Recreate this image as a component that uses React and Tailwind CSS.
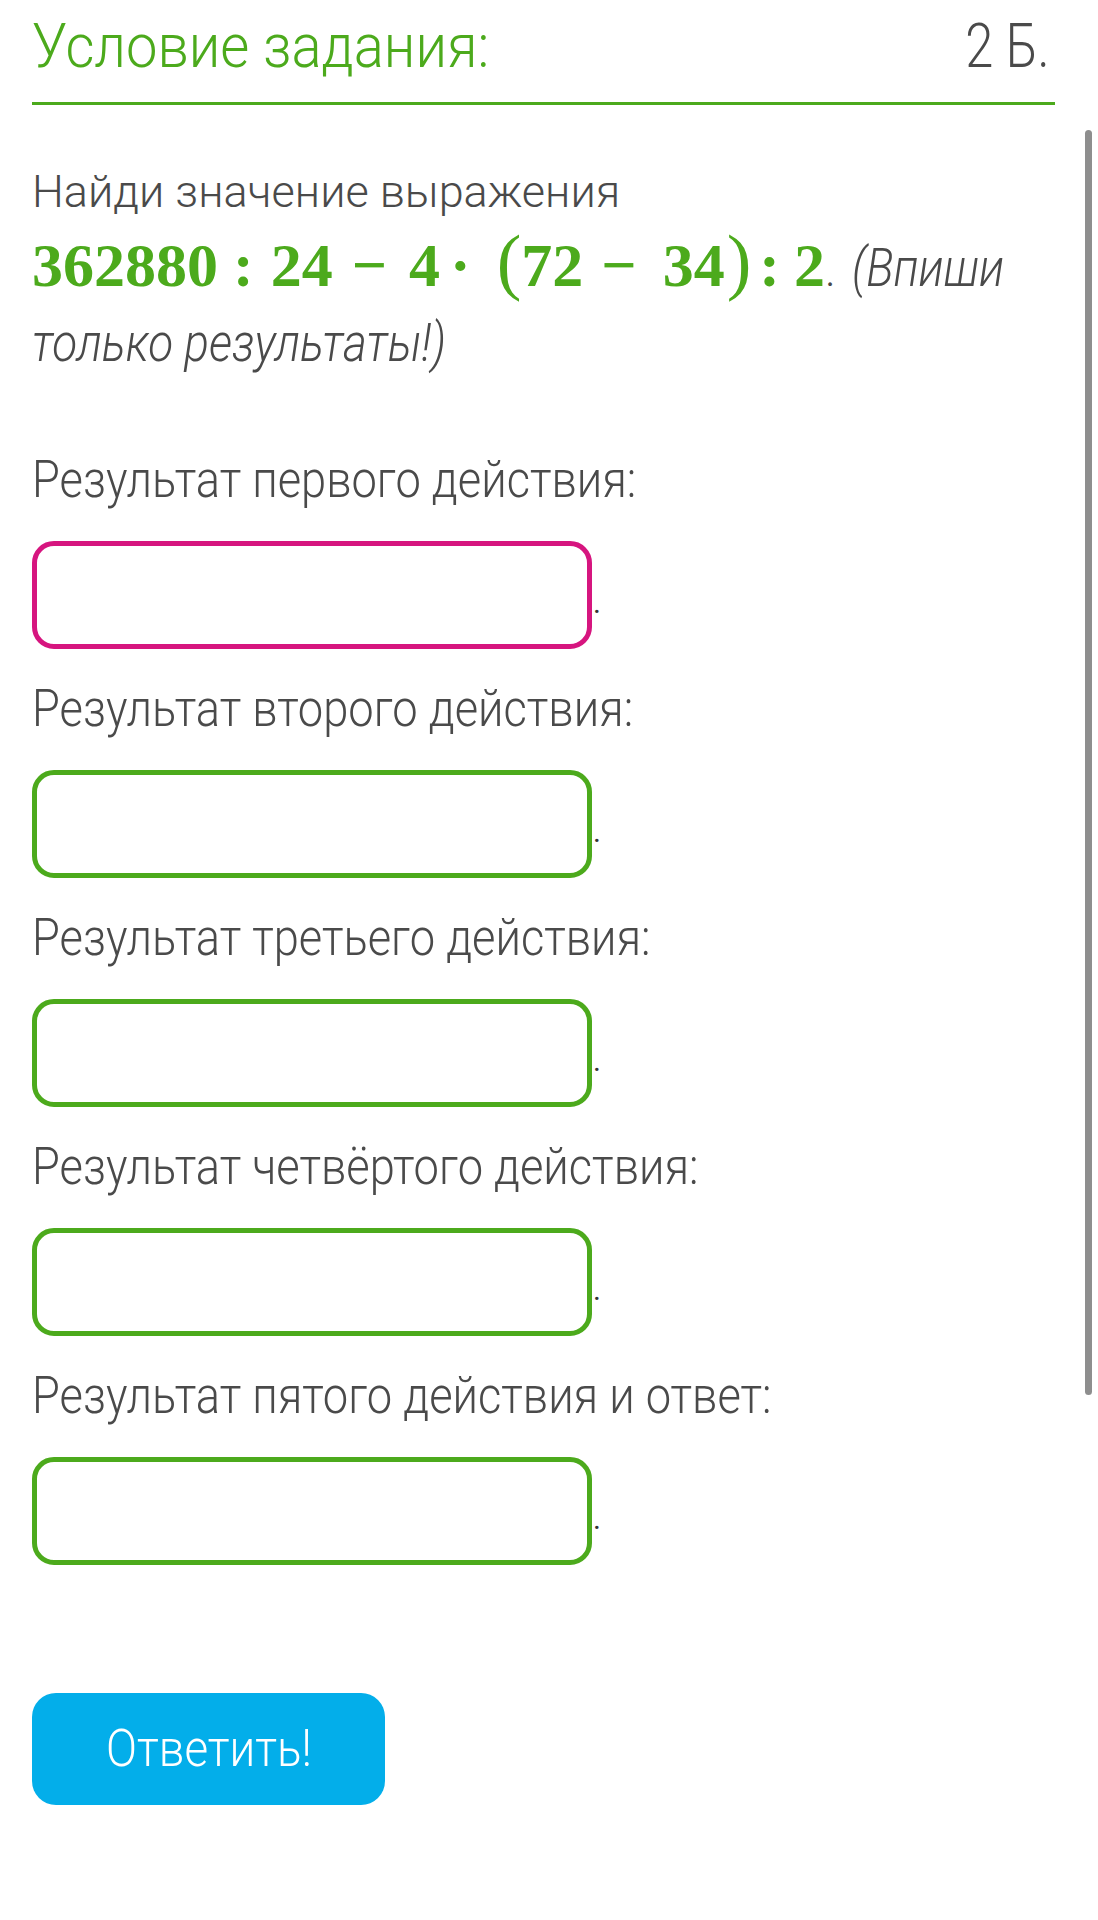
export default function App() {
  const labels = [
    "Результат первого действия:",
    "Результат второго действия:",
    "Результат третьего действия:",
    "Результат четвёртого действия:",
    "Результат пятого действия и ответ:",
  ];
  return (
    <div className="relative w-[1098px] h-[1920px] bg-white font-['Roboto',sans-serif] font-light text-[#4a4a4a]">
      <div className="pl-[32px] w-[1055px]">
        <div className="flex items-start justify-between pt-[6px] pb-[16px] pr-[5px] border-b-[3px] border-[#4caa1c] text-[61px] leading-[80px]">
          <span className="inline-block text-[#4caa1c] origin-left scale-x-[0.92]">Условие задания:</span>
          <span className="inline-block origin-right scale-x-[0.83]">2 Б.</span>
        </div>

        <div className="mt-[55px] text-[45px] leading-[64px]">Найди значение выражения</div>
        <div className="flex items-baseline h-[78px] leading-[78px] text-[62px] font-bold font-['Liberation_Serif',serif] text-[#4caa1c]">
          <span>362880</span>
          <span className="ml-[15px]">:</span>
          <span className="ml-[17px]">24</span>
          <span className="ml-[19px]">−</span>
          <span className="ml-[22px]">4</span>
          <span className="ml-[10px]">·</span>
          <span className="ml-[26px] text-[74px] font-normal leading-none">(</span>
          <span>72</span>
          <span className="ml-[18px]">−</span>
          <span className="ml-[26px]">34</span>
          <span className="ml-[2px] text-[74px] font-normal leading-none">)</span>
          <span className="ml-[8px]">:</span>
          <span className="ml-[14px]">2</span>
          <span className="font-['Roboto',sans-serif] font-light text-[#4a4a4a] text-[45px]">.</span>
          <span className="inline-block ml-[16px] origin-left scale-x-[0.85] font-['Roboto',sans-serif] font-light italic text-[#4a4a4a] text-[54px]">(Впиши</span>
        </div>
        <div className="mt-[9px] text-[54px] leading-[64px] italic">
          <span className="inline-block origin-left scale-x-[0.85]">только результаты!)</span>
        </div>

        <div className="mt-[73px] flex flex-col gap-[28px]">
          {labels.map((l, i) => (
            <div key={i} className="flex flex-col gap-[29px]">
              <div className="text-[52px] leading-[64px]">
                <span className="inline-block origin-left scale-x-[0.87]">{l}</span>
              </div>
              <div className="flex items-end">
                <div
                  className={
                    i === 0
                      ? "w-[560px] h-[108px] rounded-[22px] border-[5px] border-[#d6157f] bg-white"
                      : "w-[560px] h-[108px] rounded-[22px] border-[5px] border-[#4caa1c] bg-white"
                  }
                />
                <span className="mb-[31px] ml-[1px] text-[30px] leading-none font-normal text-[#333]">.</span>
              </div>
            </div>
          ))}
        </div>

        <div className="mt-[128px] w-[353px] h-[112px] rounded-[24px] bg-[#03aeea] flex items-center justify-center text-white text-[52px]">
          <span className="inline-block scale-x-[0.88]">Ответить!</span>
        </div>
      </div>

      <div className="absolute left-[1085px] top-[130px] w-[7px] h-[1265px] rounded-full bg-[#8e8e8e]" />
    </div>
  );
}
